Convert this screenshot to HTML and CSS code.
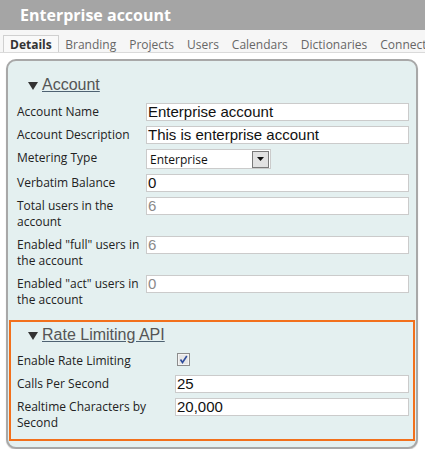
FILE: index.html
```html
<!DOCTYPE html>
<html>
<head>
<meta charset="utf-8">
<link rel="stylesheet" href="styles.css">
</head>
<body>
<div class="titlebar">Enterprise account</div>
<div class="tabs">
  <span class="tab active">Details</span>
  <span class="tab">Branding</span>
  <span class="tab">Projects</span>
  <span class="tab">Users</span>
  <span class="tab">Calendars</span>
  <span class="tab">Dictionaries</span>
  <span class="tab">Connect</span>
</div>
<div class="panel">
  <div class="section">
    <div class="heading"><svg class="tri" width="10" height="8" viewBox="0 0 10 8"><polygon points="0,0 10,0 5,8" fill="#333"/></svg><span class="htext">Account</span></div>
    <div class="grid grid-account">
      <div class="label">Account Name</div>
      <div class="input">Enterprise account</div>
      <div class="label">Account Description</div>
      <div class="input">This is enterprise account</div>
      <div class="label">Metering Type</div>
      <div class="select"><span class="seltext">Enterprise</span><span class="selbtn"><svg width="7" height="4" viewBox="0 0 7 4"><polygon points="0,0 7,0 3.5,4" fill="#111"/></svg></span></div>
      <div class="label">Verbatim Balance</div>
      <div class="input">0</div>
      <div class="label">Total users in the account</div>
      <div class="input disabled">6</div>
      <div class="label">Enabled "full" users in the account</div>
      <div class="input disabled">6</div>
      <div class="label">Enabled "act" users in the account</div>
      <div class="input disabled">0</div>
    </div>
  </div>
  <div class="rate">
    <div class="heading"><svg class="tri" width="10" height="8" viewBox="0 0 10 8"><polygon points="0,0 10,0 5,8" fill="#333"/></svg><span class="htext">Rate Limiting API</span></div>
    <div class="grid grid-rate">
      <div class="label">Enable Rate Limiting</div>
      <div class="checkcell"><svg class="checkbox" width="13" height="13" viewBox="0 0 13 13"><rect x="0.5" y="0.5" width="12" height="12" fill="#d9d9d9" stroke="#8c8c8c"/><rect x="1.5" y="1.5" width="10" height="10" fill="#e6e6e6" stroke="#f4f4f4"/><path d="M3.5 6.5 L5.5 9.5 L9.8 3" fill="none" stroke="#2f4d9c" stroke-width="1.6"/></svg></div>
      <div class="label">Calls Per Second</div>
      <div class="input">25</div>
      <div class="label">Realtime Characters by Second</div>
      <div class="input">20,000</div>
    </div>
  </div>
</div>
</body>
</html>
```

FILE: styles.css
```css
html, body {
  margin: 0;
  padding: 0;
  background: #ffffff;
  font-family: "Open Sans", "Liberation Sans", sans-serif;
}

.titlebar {
  height: 30px;
  line-height: 30px;
  background: #a5a5a5;
  color: #ffffff;
  font-weight: 700;
  font-size: 16px;
  padding-left: 20px;
}

.tabs {
  height: 22px;
  background: #f6f6f6;
  border-bottom: 1px solid #dadada;
  display: flex;
  align-items: flex-end;
  padding-left: 3px;
  white-space: nowrap;
  overflow: hidden;
}

.tab {
  flex-shrink: 0;
  font-size: 12px;
  line-height: 15px;
  padding: 1px 5.5px 0 5.5px;
  color: #666;
  border: 1px solid transparent;
  border-bottom: none;
}

.tab.active {
  color: #333;
  font-weight: 700;
  padding: 1px 6px 0 6px;
  border-color: #d0d0d0;
  background: #f9f9f9;
}

.panel {
  margin: 6px 7px 0 6px;
  border: 2px solid #a8a8a8;
  border-radius: 10px;
  background: #e4f0f0;
  padding: 14px 1px 6px 1px;
  box-shadow: 0 1px 1px #c8c8c8;
}

.section {
  padding: 0 8px;
}

.heading {
  display: flex;
  align-items: center;
  height: 20px;
  padding-left: 11px;
  margin-bottom: 8px;
}

.tri {
  margin-right: 4px;
  margin-top: 1px;
}

.htext {
  font-family: "Liberation Sans", Arial, sans-serif;
  font-size: 16px;
  color: #555;
  text-decoration: underline;
  text-decoration-color: #4e6272;
}

.grid {
  display: grid;
  row-gap: 5px;
  align-items: start;
}

.grid-account {
  grid-template-columns: 129px 263px;
}

.grid-rate {
  grid-template-columns: 158px 234px;
}

.label {
  font-size: 12px;
  line-height: 16px;
  padding: 1px 4px 1px 0;
  color: #222;
}

.input {
  box-sizing: border-box;
  height: 18px;
  background: #fff;
  border: 1px solid #cbcbcb;
  padding: 0 1px;
  font-family: "Liberation Sans", Arial, sans-serif;
  font-size: 15px;
  line-height: 16px;
  color: #111;
  white-space: nowrap;
  overflow: hidden;
}

.input.disabled {
  color: #8a8a8a;
}

.select {
  box-sizing: border-box;
  width: 125px;
  height: 20px;
  background: #fff;
  border: 1px solid #cbcbcb;
  display: flex;
  align-items: center;
  justify-content: space-between;
  padding: 0 1px 0 3px;
}

.seltext {
  font-size: 12px;
  color: #111;
}

.selbtn {
  box-sizing: border-box;
  width: 17px;
  height: 17px;
  border: 1px solid #7a7a7a;
  background: #e2e2e2;
  display: flex;
  align-items: center;
  justify-content: center;
}

.rate {
  margin-top: 11px;
  border: 2px solid #f2701c;
  padding: 3px 6px 7px 6px;
}

.rate .heading {
  margin-bottom: 7px;
}

.checkcell {
  height: 18px;
  padding-left: 2px;
}

.checkbox {
  display: block;
  margin-top: 1px;
}
```
